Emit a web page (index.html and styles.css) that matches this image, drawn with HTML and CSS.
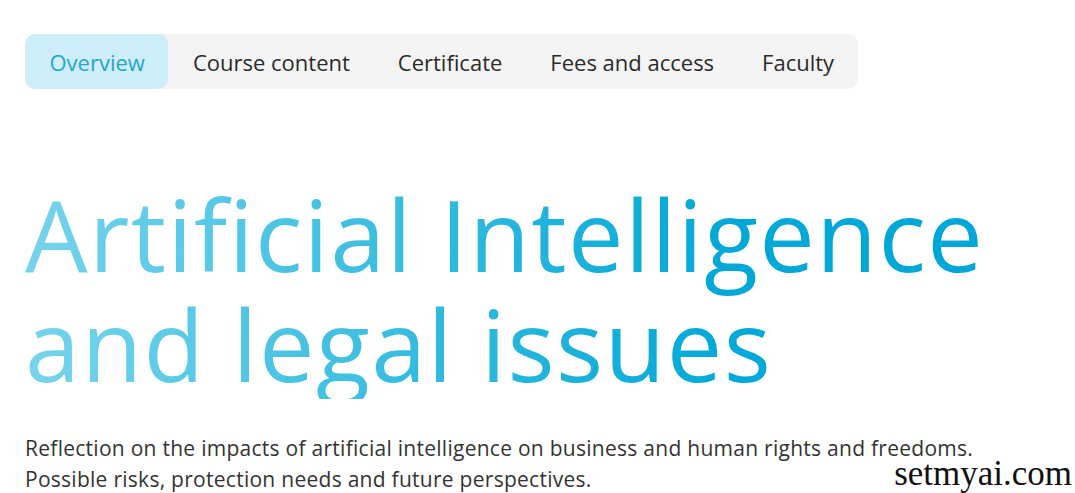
FILE: index.html
```html
<!DOCTYPE html>
<html lang="en">
<head>
<meta charset="utf-8">
<title>Artificial Intelligence and legal issues</title>
<link rel="stylesheet" href="styles.css">
</head>
<body>
<main class="page">
  <nav class="tabs">
    <a class="tab tab-active" href="#">Overview</a>
    <a class="tab" href="#">Course content</a>
    <a class="tab" href="#">Certificate</a>
    <a class="tab" href="#">Fees and access</a>
    <a class="tab" href="#">Faculty</a>
  </nav>
  <h1 class="title">Artificial Intelligence<br>and legal issues</h1>
  <p class="lead">Reflection on the impacts of artificial intelligence on business and human rights and freedoms.<br>Possible risks, protection needs and future perspectives.</p>
</main>
<div class="watermark">setmyai.com</div>
</body>
</html>
```

FILE: styles.css
```css
html, body {
  margin: 0;
  padding: 0;
  background: #ffffff;
}
body {
  font-family: "Open Sans", "Noto Sans", sans-serif;
  color: #333333;
  width: 1075px;
  height: 493px;
  overflow: hidden;
  position: relative;
}
.page {
  padding: 34px 0 0 25px;
}
.tabs {
  display: inline-flex;
  background: #f4f4f4;
  border-radius: 10px;
  height: 55px;
  align-items: stretch;
}
.tab {
  display: flex;
  align-items: center;
  padding: 0 23.5px 0 24.5px;
  font-size: 22px;
  color: #2b2b2b;
  text-decoration: none;
  border-radius: 10px;
}
.tab-active {
  background: #cdeef8;
  color: #1ea7ca;
}
.title {
  margin: 90px 0 0 0;
  font-size: 99px;
  font-weight: 400;
  line-height: 110px;
  letter-spacing: 1.4px;
  background: linear-gradient(90deg, #76d4eb 0%, #02a8d7 70%, #00a6d6 100%);
  -webkit-background-clip: text;
  background-clip: text;
  color: transparent;
  width: 1000px;
}
.lead {
  margin: 34px 0 0 0;
  font-size: 21px;
  line-height: 31px;
  letter-spacing: 0.27px;
  color: #333333;
}
.watermark {
  position: absolute;
  right: 3px;
  bottom: 6px;
  font-family: "Liberation Serif", "Times New Roman", serif;
  font-size: 35px;
  line-height: 26px;
  color: #111111;
}
```
